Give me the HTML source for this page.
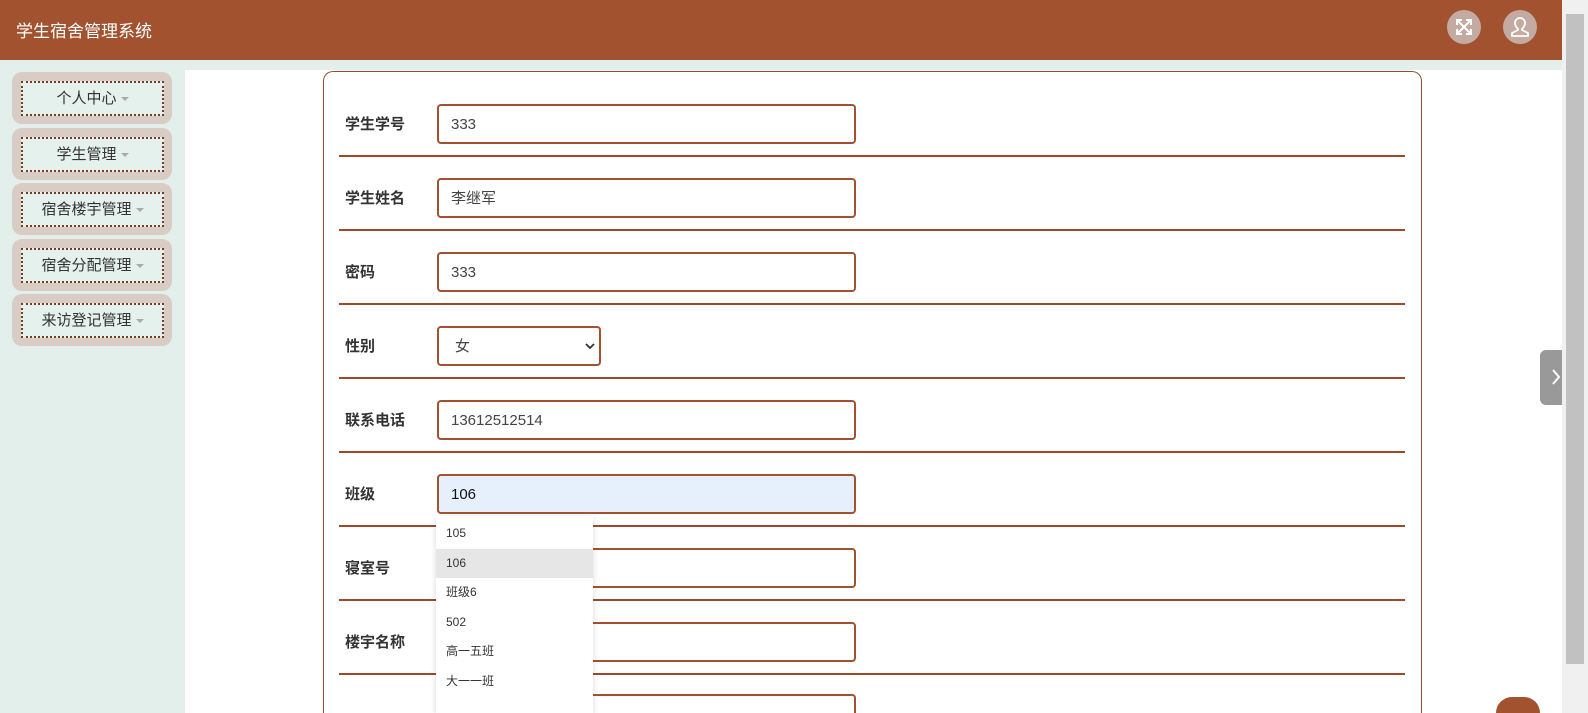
<!DOCTYPE html>
<html style="overflow:hidden;width:1588px;height:713px"><head><meta charset="utf-8"><style>
*{box-sizing:border-box;margin:0;padding:0}
html,body{width:1588px;height:713px;overflow:hidden}
body{background:#e2efea;font-family:"Liberation Sans","Noto Sans CJK SC",sans-serif}
#w{position:relative;width:1588px;height:713px;overflow:hidden}
.hdr{position:absolute;left:0;top:0;width:1562px;height:60px;background:#a35230;color:#fff}
.hdr .t{position:absolute;left:16px;top:17px;font-size:17px}
.ic{position:absolute;top:10px;width:34px;height:34px;border-radius:50%;background:#c4aba1}
.side{position:absolute;left:0;top:70px;width:184px;height:643px;background:#e2efea}
.mi{position:absolute;left:12px;width:160px;height:52px;border-radius:10px;background:#d8ccc4}
.mi div{position:absolute;left:9px;top:9px;width:143px;height:35px;border:2px dotted #7a3a20;background:#e4f1ec;text-align:center;line-height:31px;font-size:15px;color:#333}
.mi span{display:inline-block;width:0;height:0;border-left:4px solid transparent;border-right:4px solid transparent;border-top:4px solid #aaa;vertical-align:middle;margin-left:4px}
.main{position:absolute;left:185px;top:70px;width:1377px;height:643px;background:#fff}
.box{position:absolute;left:323px;top:71px;width:1099px;height:642px;border:1.5px solid #9c4a2a;border-bottom:none;border-radius:10px 10px 0 0}
.row{position:absolute;left:339px;width:1066px;height:74px;border-bottom:2px solid #9c4a2a}
.lab{position:absolute;left:6px;font-size:15px;font-weight:bold;color:#333;line-height:18px}
.inp{position:absolute;left:98px;width:419px;height:40px;border:2px solid #a35230;border-radius:4px;font-size:15px;color:#444;padding-left:12px;line-height:38px}
.scr{position:absolute;left:1562px;top:0;width:26px;height:713px;background:#f0f0f0}
.dd{position:absolute;left:436px;top:516px;width:157px;height:197px;background:#fff;box-shadow:0 2px 6px rgba(0,0,0,.15);font-size:12px;color:#333;padding-top:3px}
.dd div{height:29.5px;line-height:29.5px;padding-left:10px}
</style></head><body><div id="w">
<div class="hdr"><div class="t">学生宿舍管理系统</div>
<div class="ic" style="left:1447px"><svg width="34" height="34" viewBox="0 0 34 34" stroke="#fff" stroke-width="2" fill="none"><path d="M11 11l12 12M23 11L11 23M10 15v-5h5M24 15v-5h-5M10 19v5h5M24 19v5h-5"/></svg></div>
<div class="ic" style="left:1503px"><svg width="34" height="34" viewBox="0 0 34 34" stroke="#fff" stroke-width="1.8" fill="none"><path d="M17 8a5 5 0 0 1 5 5c0 3-2 5-3 6v1l6 3v3H9v-3l6-3v-1c-1-1-3-3-3-6a5 5 0 0 1 5-5z"/></svg></div>
</div>
<div class="side">
<div class="mi" style="top:2px"><div>个人中心<span></span></div></div>
<div class="mi" style="top:58px"><div>学生管理<span></span></div></div>
<div class="mi" style="top:113px"><div>宿舍楼宇管理<span></span></div></div>
<div class="mi" style="top:169px"><div>宿舍分配管理<span></span></div></div>
<div class="mi" style="top:224px"><div>来访登记管理<span></span></div></div>
</div>
<div class="main"></div>
<div class="box"></div>
<div class="row" style="top:83px"><div class="lab" style="top:33px">学生学号</div><div class="inp" style="top:21px">333</div></div>
<div class="row" style="top:157px"><div class="lab" style="top:33px">学生姓名</div><div class="inp" style="top:21px">李继军</div></div>
<div class="row" style="top:231px"><div class="lab" style="top:33px">密码</div><div class="inp" style="top:21px">333</div></div>
<div class="row" style="top:305px"><div class="lab" style="top:33px">性别</div><div class="inp" style="top:21px;width:164px;padding-left:16px">女<svg style="position:absolute;right:4px;top:15px" width="10" height="7" viewBox="0 0 10 7"><path d="M1 1l4 4 4-4" stroke="#333" stroke-width="1.8" fill="none"/></svg></div></div>
<div class="row" style="top:379px"><div class="lab" style="top:33px">联系电话</div><div class="inp" style="top:21px">13612512514</div></div>
<div class="row" style="top:453px"><div class="lab" style="top:33px">班级</div><div class="inp" style="top:21px;background:#e6f0fc;color:#111">106</div></div>
<div class="row" style="top:527px"><div class="lab" style="top:33px">寝室号</div><div class="inp" style="top:21px"></div></div>
<div class="row" style="top:601px"><div class="lab" style="top:33px">楼宇名称</div><div class="inp" style="top:21px"></div></div>
<div style="position:absolute;left:437px;top:694px;width:419px;height:19px;border:2px solid #a35230;border-bottom:none;border-radius:4px 4px 0 0"></div>
<div class="dd"><div>105</div><div style="background:#e6e6e6">106</div><div>班级6</div><div>502</div><div>高一五班</div><div>大一一班</div></div>
<div class="scr"><div style="position:absolute;left:4px;top:14px;width:18px;height:650px;background:#c1c1c1"></div></div>
<div style="position:absolute;left:1540px;top:350px;width:22px;height:55px;border-radius:6px 0 0 6px;background:#999"><svg width="22" height="55" viewBox="0 0 22 55"><path d="M13 20l6 7-6 7" stroke="#fff" stroke-width="2" fill="none"/></svg></div>
<div style="position:absolute;left:1496px;top:697px;width:44px;height:16px;border-radius:22px 22px 0 0;background:#a35230"></div>
</div></body></html>
